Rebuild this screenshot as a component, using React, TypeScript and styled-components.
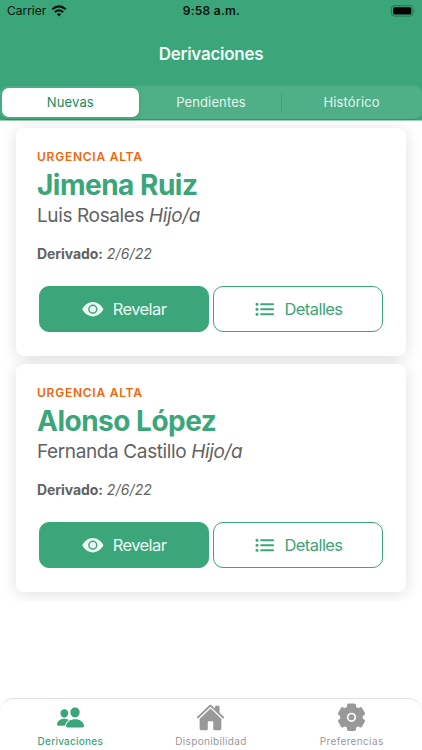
import React from 'react';
import styled, { createGlobalStyle } from 'styled-components';
import { IoHome, IoPeople } from 'react-icons/io5';

const GREEN = '#3ba679';

const GlobalStyle = createGlobalStyle`
  * { box-sizing: border-box; }
  body {
    margin: 0;
    background: #fff;
    font-family: Inter, 'Liberation Sans', sans-serif;
    -webkit-font-smoothing: antialiased;
  }
`;

const Screen = styled.div`
  width: 422px;
  height: 750px;
  display: flex;
  flex-direction: column;
  overflow: hidden;
  background: #fff;
`;

const Header = styled.header`
  flex: none;
  height: 121px;
  display: flex;
  flex-direction: column;
  background: ${GREEN};
  border-bottom: 1px solid #9bd0b9;
`;

const StatusBar = styled.div`
  height: 22px;
  padding: 0 6px 0 7px;
  display: grid;
  grid-template-columns: 1fr auto 1fr;
  align-items: center;
  color: #07130e;
  font-size: 12px;
  line-height: 22px;
`;

const Carrier = styled.span`
  display: flex;
  align-items: center;
  gap: 5px;
  letter-spacing: -0.02px;
`;

const Clock = styled.span`
  font-weight: 600;
  letter-spacing: 0.25px;
`;

const BatterySlot = styled.span`
  display: flex;
  justify-content: flex-end;
`;

const Title = styled.h1`
  margin: 0;
  height: 64px;
  text-align: center;
  font-size: 17px;
  font-weight: 600;
  line-height: 64px;
  letter-spacing: -0.28px;
  color: #eefaf5;
`;

const Segments = styled.nav`
  height: 34px;
  display: grid;
  grid-template-columns: repeat(3, 1fr);
  align-items: center;
  background: #4fb088;
  border-radius: 8px;
  border-bottom: 1px solid #2f9468;
`;

const Segment = styled.button<{ $active?: boolean; $divided?: boolean }>`
  position: relative;
  height: 29px;
  margin: 0 2px;
  padding: 0 0 2px;
  border: 0;
  border-radius: 7px;
  font: 400 13px/26px Inter, sans-serif;
  letter-spacing: 0.13px;
  color: ${(p) => (p.$active ? '#1b8a5a' : '#e4f5ed')};
  background: ${(p) => (p.$active ? '#fff' : 'transparent')};
  box-shadow: ${(p) => (p.$active ? '0 2px 6px rgba(0, 0, 0, 0.1)' : 'none')};

  &::before {
    content: '';
    display: ${(p) => (p.$divided ? 'block' : 'none')};
    position: absolute;
    left: -2px;
    top: 5px;
    width: 1px;
    height: 19px;
    background: #3f9f76;
  }
`;

const List = styled.main`
  flex: none;
  height: 480px;
  padding: 7px 16px 8px;
  display: flex;
  flex-direction: column;
  gap: 8px;
  overflow: hidden;
`;

const Card = styled.article`
  flex: none;
  height: 228px;
  padding: 21px 21px 0;
  border-radius: 8px;
  background: #fff;
  box-shadow: 0 2px 16px rgba(0, 0, 0, 0.13);
`;

const Urgency = styled.div`
  height: 16px;
  line-height: 16px;
  font-size: 12px;
  font-weight: 600;
  letter-spacing: 0.75px;
  color: #f2660c;
`;

const Name = styled.h2`
  margin: 0;
  height: 38px;
  line-height: 40px;
  font-size: 28px;
  font-weight: 700;
  letter-spacing: -0.5px;
  color: ${GREEN};
  white-space: nowrap;
`;

const Relative = styled.div`
  height: 24px;
  line-height: 26px;
  font-size: 19px;
  letter-spacing: -0.38px;
  color: #626262;
  white-space: nowrap;
`;

const Referred = styled.div`
  height: 20px;
  margin-top: 17px;
  line-height: 20px;
  font-size: 14px;
  color: #626262;

  strong { letter-spacing: -0.08px; }
  em { letter-spacing: 0.15px; }
`;

const Actions = styled.div`
  margin: 22px 2px 0;
  display: flex;
  gap: 4px;
`;

const Action = styled.button<{ $filled?: boolean }>`
  width: 170px;
  height: 46px;
  padding: 0;
  display: flex;
  align-items: center;
  justify-content: center;
  gap: 8px;
  border: 1px solid ${GREEN};
  border-radius: 10px;
  font: 400 16.5px Inter, sans-serif;
  letter-spacing: -0.57px;
  color: ${(p) => (p.$filled ? '#eefaf5' : GREEN)};
  background: ${(p) => (p.$filled ? GREEN : '#fff')};
`;

const TabBar = styled.footer`
  flex: none;
  height: 52px;
  margin-top: auto;
  display: grid;
  grid-template-columns: repeat(3, 1fr);
  border: 1px solid #e0e0e0;
  border-width: 1px 0 0;
  border-radius: 14px 14px 0 0;
  background: #fff;
`;

const Tab = styled.div<{ $active?: boolean }>`
  display: flex;
  flex-direction: column;
  align-items: center;
  padding-top: 4px;
  font-size: 10px;
  font-weight: ${(p) => (p.$active ? 500 : 400)};
  line-height: 18px;
  letter-spacing: ${(p) => (p.$active ? 0.24 : 0.36)}px;
  color: ${(p) => (p.$active ? GREEN : '#999')};

  svg { display: block; }
`;

const WifiGlyph = () => (
  <svg width="16" height="12" viewBox="0 0 16 12" fill="none" stroke="#07130e" strokeWidth="2.1">
    <path d="M1.2 4.2Q8 -1.5 14.8 4.2" />
    <path d="M3.8 7.1Q8 3.7 12.2 7.1" />
    <path d="M5.7 9.1Q8 7.2 10.3 9.1L8 11.4Z" fill="#07130e" stroke="none" />
  </svg>
);

const BatteryGlyph = () => (
  <svg width="26" height="12" viewBox="0 0 26 12">
    <rect x="1.4" y="0.7" width="21.5" height="10.4" rx="3" fill="none" stroke="#23724f" />
    <rect x="3.1" y="2.3" width="18.2" height="7.2" rx="1.5" fill="#000" />
    <path d="M24.3 4.2Q25.9 5.9 24.3 7.6Z" fill="#23724f" />
  </svg>
);

const EyeGlyph = () => (
  <svg width="23" height="23" viewBox="0 0 23 23">
    <path d="M0.1 11.3C2.6 6.8 6.6 4 10.8 4S19 6.8 21.5 11.3C19 15.8 15 18.4 10.8 18.4S2.6 15.8 0.1 11.3Z" fill="currentColor" />
    <circle cx="10.8" cy="11.2" r="3.9" fill="none" stroke={GREEN} strokeWidth="1.5" />
  </svg>
);

const ListGlyph = () => (
  <svg width="23" height="23" viewBox="0 0 23 23" fill="none" stroke="currentColor" strokeWidth="2.1" strokeLinecap="round">
    <path d="M8.2 6.2H20M8.2 11.2H20M8.2 16.2H20" />
    <path d="M4 6.2h0.01M4 11.2h0.01M4 16.2h0.01" strokeWidth="3.1" />
  </svg>
);

const GearGlyph = () => (
  <svg width="29" height="29" viewBox="0 0 29 29" fill="currentColor">
    <circle cx="14.5" cy="14.3" r="11.3" />
    {[0, 60, 120].map((angle) => (
      <rect key={angle} x="10" y="0.5" width="9" height="27.6" rx="1.8" transform={`rotate(${angle} 14.5 14.3)`} />
    ))}
    <circle cx="14.5" cy="14.3" r="3.8" stroke="#fff" strokeWidth="1.7" />
  </svg>
);

const referrals = [
  { name: 'Jimena Ruiz', relative: 'Luis Rosales', date: '2/6/22' },
  { name: 'Alonso López', relative: 'Fernanda Castillo', date: '2/6/22' },
];

export default function App() {
  return (
    <Screen>
      <GlobalStyle />
      <Header>
        <StatusBar>
          <Carrier>Carrier <WifiGlyph /></Carrier>
          <Clock>9:58 a.m.</Clock>
          <BatterySlot><BatteryGlyph /></BatterySlot>
        </StatusBar>
        <Title>Derivaciones</Title>
        <Segments>
          <Segment $active>Nuevas</Segment>
          <Segment>Pendientes</Segment>
          <Segment $divided>Histórico</Segment>
        </Segments>
      </Header>
      <List>
        {referrals.map((r) => (
          <Card key={r.name}>
            <Urgency>URGENCIA ALTA</Urgency>
            <Name>{r.name}</Name>
            <Relative>{r.relative} <em>Hijo/a</em></Relative>
            <Referred><strong>Derivado:</strong> <em>{r.date}</em></Referred>
            <Actions>
              <Action $filled><EyeGlyph />Revelar</Action>
              <Action><ListGlyph />Detalles</Action>
            </Actions>
          </Card>
        ))}
      </List>
      <TabBar>
        <Tab $active><IoPeople size={29} />Derivaciones</Tab>
        <Tab><IoHome size={29} />Disponibilidad</Tab>
        <Tab><GearGlyph />Preferencias</Tab>
      </TabBar>
    </Screen>
  );
}
